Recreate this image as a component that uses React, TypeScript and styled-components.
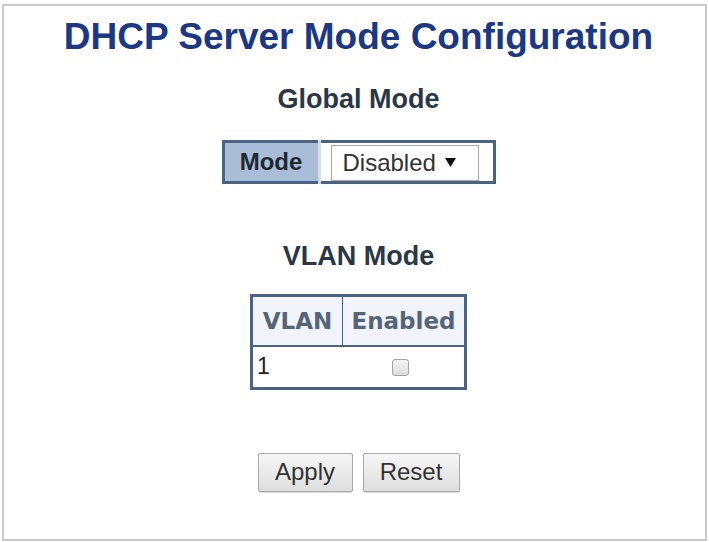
import styled, { createGlobalStyle } from "styled-components";

const GlobalStyle = createGlobalStyle`
  html, body {
    margin: 0;
    padding: 0;
    background: #ffffff;
  }
  body {
    font-family: "Liberation Sans", Arial, sans-serif;
  }
`;

export default function App() {
  return (
    <>
      <GlobalStyle />
      <Frame>
        <Title>DHCP Server Mode Configuration</Title>

        <SectionTitle $top={27}>Global Mode</SectionTitle>
        <ModeTable>
          <tbody>
            <tr>
              <ModeHead>Mode</ModeHead>
              <ModeCell>
                <SelectBox>
                  <span>Disabled</span>
                  <svg width='11' height='9' viewBox='0 0 11 9'>
                    <path d='M0 0 L11 0 L5.5 9 Z' fill='#111' />
                  </svg>
                </SelectBox>
              </ModeCell>
            </tr>
          </tbody>
        </ModeTable>

        <SectionTitle $top={57}>VLAN Mode</SectionTitle>
        <VlanTable>
          <thead>
            <tr>
              <VlanHead $width={91}>VLAN</VlanHead>
              <VlanHead $width={123}>Enabled</VlanHead>
            </tr>
          </thead>
          <tbody>
            <tr>
              <VlanCell>1</VlanCell>
              <VlanCell $center>
                <Check />
              </VlanCell>
            </tr>
          </tbody>
        </VlanTable>

        <Buttons>
          <Button $width={95}>Apply</Button>
          <Button $width={97}>Reset</Button>
        </Buttons>
      </Frame>
    </>
  );
}

/*
=========== STYLES =================
*/
const Frame = styled.div`
  box-sizing: border-box;
  margin: 4px 0 0 2px;
  width: 705px;
  height: 537px;
  border: 2px solid #cbcbcb;
  padding: 11px 0 0 8px;
  display: flex;
  flex-direction: column;
  align-items: center;
`;

const Title = styled.h1`
  margin: 0;
  font-size: 37px;
  line-height: 40px;
  font-weight: bold;
  color: #1c3885;
  white-space: nowrap;
`;

const SectionTitle = styled.h2<{ $top: number }>`
  margin: ${(p) => p.$top}px 0 0;
  font-size: 27px;
  line-height: 30px;
  font-weight: bold;
  color: #2a3746;
`;

const ModeTable = styled.table`
  margin-top: 26px;
  border-collapse: collapse;
  border: 3px solid #4a6383;
  height: 44px;
`;

const ModeHead = styled.th`
  box-sizing: border-box;
  width: 96px;
  padding: 0;
  background: #a9bdd7;
  color: #1e2833;
  font-size: 24px;
  font-weight: bold;
  text-align: center;
`;

const ModeCell = styled.td`
  padding: 1px 14px 0 10px;
  border-left: 3px solid #d5dce4;
  background: #ffffff;
`;

const SelectBox = styled.div`
  box-sizing: border-box;
  width: 148px;
  height: 36px;
  display: flex;
  align-items: center;
  gap: 9px;
  padding-left: 11px;
  border: 1px solid #a9a9a9;
  background: #ffffff;
  color: #333333;
  font-size: 24px;
`;

const VlanTable = styled.table`
  margin-top: 23px;
  border-collapse: collapse;
  border: 3px solid #4a6383;
`;

const VlanHead = styled.th<{ $width: number }>`
  box-sizing: border-box;
  width: ${(p) => p.$width}px;
  height: 50px;
  padding: 0;
  border-left: 1px solid #4a6383;
  border-bottom: 2px solid #4a6383;
  background: #f1f5fb;
  color: #56647a;
  font-family: "DejaVu Sans", Verdana, sans-serif;
  font-size: 23px;
  font-weight: bold;
  text-align: center;

  &:first-child {
    border-left: none;
  }
`;

const VlanCell = styled.td<{ $center?: boolean }>`
  height: 40px;
  padding: 0 ${(p) => (p.$center ? 0 : 4)}px;
  text-align: ${(p) => (p.$center ? "center" : "left")};
  color: #222222;
  font-size: 23px;
  vertical-align: middle;
`;

const Check = styled.span`
  display: inline-block;
  vertical-align: middle;
  box-sizing: border-box;
  width: 17px;
  height: 17px;
  margin-right: 6px;
  border: 1px solid #a3a3a3;
  border-radius: 3px;
  background: linear-gradient(#f4f4f4, #dcdcdc);
`;

const Buttons = styled.div`
  margin-top: 63px;
  display: flex;
  gap: 10px;
`;

const Button = styled.button<{ $width: number }>`
  box-sizing: border-box;
  width: ${(p) => p.$width}px;
  height: 39px;
  padding: 0;
  border: 1px solid #a8a8a8;
  border-radius: 2px;
  background: linear-gradient(#f6f6f6, #dedede);
  box-shadow: 0 1px 1px rgba(0, 0, 0, 0.15);
  color: #333333;
  font-family: "Liberation Sans", Arial, sans-serif;
  font-size: 24px;
`;
